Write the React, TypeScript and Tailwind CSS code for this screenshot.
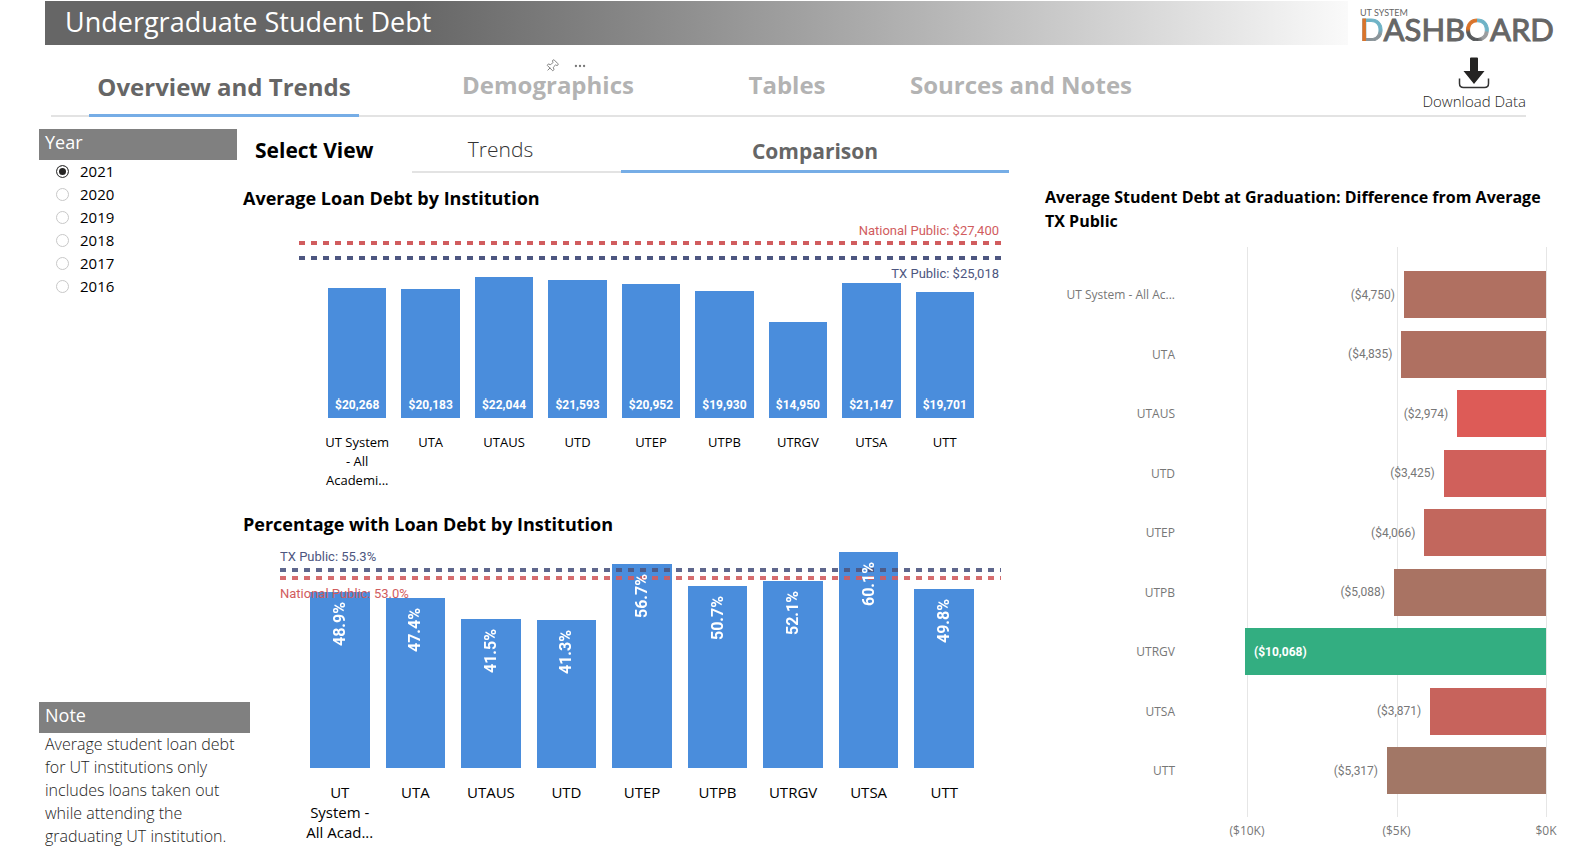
import { useState } from "react";
import { Ellipsis, Pin } from "lucide-react";

const years = ["2021", "2020", "2019", "2018", "2017", "2016"];

const tabs = [
  { name: "Overview and Trends", width: "w-[270px] mr-[71px]" },
  { name: "Demographics", width: "w-[236px]" },
  { name: "Tables", width: "w-[242px]" },
  { name: "Sources and Notes", width: "w-[226px]" },
];

const averageDebt = [
  { name: "UT System\n- All\nAcademi...", value: 20268 },
  { name: "UTA", value: 20183 },
  { name: "UTAUS", value: 22044 },
  { name: "UTD", value: 21593 },
  { name: "UTEP", value: 20952 },
  { name: "UTPB", value: 19930 },
  { name: "UTRGV", value: 14950 },
  { name: "UTSA", value: 21147 },
  { name: "UTT", value: 19701 },
];

const percentDebt = [
  { name: "UT\nSystem -\nAll Acad...", value: 48.9 },
  { name: "UTA", value: 47.4 },
  { name: "UTAUS", value: 41.5 },
  { name: "UTD", value: 41.3 },
  { name: "UTEP", value: 56.7 },
  { name: "UTPB", value: 50.7 },
  { name: "UTRGV", value: 52.1 },
  { name: "UTSA", value: 60.1 },
  { name: "UTT", value: 49.8 },
];

const difference = [
  { name: "UT System - All Ac...", value: 4750, color: "bg-[#b07061]" },
  { name: "UTA", value: 4835, color: "bg-[#af7061]" },
  { name: "UTAUS", value: 2974, color: "bg-[#dd5b57]" },
  { name: "UTD", value: 3425, color: "bg-[#d0605b]" },
  { name: "UTEP", value: 4066, color: "bg-[#c2675d]" },
  { name: "UTPB", value: 5088, color: "bg-[#a97363]" },
  { name: "UTRGV", value: 10068, color: "bg-[#33ae81]" },
  { name: "UTSA", value: 3871, color: "bg-[#c7635c]" },
  { name: "UTT", value: 5317, color: "bg-[#a27766]" },
];

// top of each value axis
const DEBT_MAX = 30800;
const PERCENT_MAX = 63.5;
const DIFF_MAX = 10068;

const redDash = "bg-[repeating-linear-gradient(90deg,#d15c5e_0_6px,transparent_6px_12px)]";
const navyDash = "bg-[repeating-linear-gradient(90deg,#4d5680_0_6px,transparent_6px_12px)]";

function Logo() {
  return (
    <div className="w-[196px] font-['Lato',sans-serif] text-[#666]">
      <div className="text-[9px] leading-[9px]">UT SYSTEM</div>
      <div className="flex text-[31px] leading-6 [-webkit-text-stroke:1px]">
        <span className="bg-[linear-gradient(90deg,#d9742b_0_6px,transparent_6px),linear-gradient(#6fb3c6_50%,#8a9499_75%)] bg-clip-text text-transparent">
          D
        </span>
        <span>ASHB</span>
        <span className="bg-[conic-gradient(#6fb3c6_0_100deg,#9a9c9e_110deg_150deg,#55585a_180deg_250deg,#d9742b_270deg)] bg-clip-text text-transparent">
          O
        </span>
        <span>ARD</span>
      </div>
    </div>
  );
}

function DownloadIcon() {
  return (
    <svg viewBox="0 0 32 32" className="h-8 w-8" aria-hidden="true">
      <path d="M12 1.500q0-1 1-1h6q1 0 1 1V14h6.500L16 27 5.500 14H12z" fill="#252423" />
      <path d="M1.500 21.500v5q0 4 4 4h21q4 0 4-4v-5" fill="none" stroke="#333" strokeWidth="1.500" />
    </svg>
  );
}

export default function App() {
  const [tab, setTab] = useState("Overview and Trends");
  const [view, setView] = useState("Comparison");
  const [year, setYear] = useState("2021");

  return (
    <div className="flex min-h-screen flex-col bg-white font-['Open_Sans','Noto_Sans',sans-serif] text-[#252423]">
      <header className="flex items-start justify-between pt-px pr-[30px] pl-[45px]">
        <h1 className="h-11 flex-1 bg-linear-to-r from-[#666] from-28% to-[#fafafa] pl-5 text-[27px] leading-[42px] text-white">
          Undergraduate Student Debt
        </h1>
        <div className="pt-[7px] pl-3">
          <Logo />
        </div>
      </header>

      <nav className="mr-[60px] ml-[51px] flex h-[72px] items-end justify-between border-b-2 border-[#e3e3e3] pl-[38px]">
        <div className="flex items-end">
          {tabs.map((t) => (
            <div key={t.name} className={`relative shrink-0 ${t.width}`}>
              <button
                onClick={() => setTab(t.name)}
                className={`-mb-0.5 h-[50px] w-full border-b-[3px] text-2xl font-bold whitespace-nowrap ${
                  tab === t.name ? "border-[#76ade6] pb-2 text-[#666]" : "border-transparent pb-3 text-[#b3b3b3]"
                }`}
              >
                {t.name}
              </button>
              {t.name === "Demographics" && (
                <div className="absolute -top-2 left-[115px] flex items-center gap-3.5 text-[#777]">
                  <button aria-label="Pin visual">
                    <Pin className="size-3.5 rotate-45" strokeWidth={1.5} />
                  </button>
                  <button aria-label="More options">
                    <Ellipsis className="size-3.5" strokeWidth={2} />
                  </button>
                </div>
              )}
            </div>
          ))}
        </div>
        <a href="#" className="flex flex-col items-center pb-0.5 text-[15px] leading-6 font-light whitespace-nowrap">
          <DownloadIcon />
          Download Data
        </a>
      </nav>

      <main className="mt-3 grid flex-1 grid-cols-[204px_766fr_547fr] pr-[30px] pl-[39px]">
        <aside className="flex flex-col justify-between pb-[3px]">
          <fieldset>
            <legend className="h-[31px] w-[198px] bg-[#808080] pl-1.5 text-lg leading-[27px] text-white">Year</legend>
            {years.map((y) => (
              <label key={y} className="flex h-[23px] items-center gap-[11px] pl-[17px] text-[15px] text-black">
                <input
                  type="radio"
                  name="year"
                  checked={year === y}
                  onChange={() => setYear(y)}
                  className="size-[13px] appearance-none rounded-full border border-[#c8c8c8] bg-white checked:border-[#444] checked:bg-[#252423] checked:shadow-[inset_0_0_0_2px_white]"
                />
                {y}
              </label>
            ))}
          </fieldset>
          <section className="w-[211px]">
            <h2 className="h-[31px] bg-[#808080] pl-1.5 text-lg leading-[27px] text-white">Note</h2>
            <p className="pr-3 pl-1.5 text-base leading-[23px] font-light">
              Average student loan debt for UT institutions only includes loans taken out while attending the graduating
              UT institution.
            </p>
          </section>
        </aside>

        <div>
          <div className="flex h-11">
            <h2 className="w-[169px] shrink-0 pl-3 text-[21px] leading-[42px] font-bold text-black">Select View</h2>
            <button
              onClick={() => setView("Trends")}
              className={`w-[209px] border-b-2 pr-8 text-[21px] ${
                view === "Trends" ? "border-[#76ade6] font-bold text-[#666]" : "border-[#e3e3e3] font-light text-[#333]"
              }`}
            >
              Trends
            </button>
            <button
              onClick={() => setView("Comparison")}
              className={`flex-1 border-b-[3px] pt-1 text-[21px] ${
                view === "Comparison" ? "border-[#76ade6] font-bold text-[#666]" : "border-[#e3e3e3] font-light text-[#333]"
              }`}
            >
              Comparison
            </button>
          </div>

          <section className="mt-[13px]">
            <h2 className="text-lg leading-6 font-bold text-black">Average Loan Debt by Institution</h2>
            <div className="relative mt-[11px] mr-1 ml-14 h-[197px]">
              <div className={`absolute inset-x-0 top-5 z-10 h-1 ${redDash}`} />
              <div className={`absolute inset-x-0 top-[35px] z-10 h-1 ${navyDash}`} />
              <span className="absolute top-0.5 right-1.5 font-['Roboto',sans-serif] text-[13px] leading-4 text-[#d15c5e]">
                National Public: $27,400
              </span>
              <span className="absolute top-[45px] right-1.5 font-['Roboto',sans-serif] text-[13px] leading-4 text-[#4d5680]">
                TX Public: $25,018
              </span>
              <div className="grid h-full grid-cols-9 items-end gap-[15px] pr-[31px] pl-[29px]">
                {averageDebt.map((d) => (
                  <div
                    key={d.name}
                    className="flex items-end justify-center bg-[#4a8ddc] pb-[5px] font-['Roboto',sans-serif] text-xs font-bold text-white"
                    style={{ height: `${(d.value / DEBT_MAX) * 100}%` }}
                  >
                    ${d.value.toLocaleString("en-US")}
                  </div>
                ))}
              </div>
            </div>
            <div className="mt-[15px] mr-[35px] ml-[85px] grid grid-cols-9 gap-[15px] text-center text-[13px] leading-[19px] text-black">
              {averageDebt.map((d) => (
                <span key={d.name} className="-mx-2 whitespace-pre">
                  {d.name}
                </span>
              ))}
            </div>
          </section>

          <section className="mt-[22px]">
            <h2 className="text-lg leading-6 font-bold text-black">Percentage with Loan Debt by Institution</h2>
            <div className="relative mt-1 mr-2 ml-[37px] h-[228px]">
              <div className="grid h-full grid-cols-9 items-end gap-4 pr-[27px] pl-[30px]">
                {percentDebt.map((d) => (
                  <div
                    key={d.name}
                    className="flex items-start justify-center bg-[#4a8ddc] pt-2.5 font-['Roboto',sans-serif] text-base leading-5 font-bold text-white"
                    style={{ height: `${(d.value / PERCENT_MAX) * 100}%` }}
                  >
                    <span className="relative z-10 rotate-180 [writing-mode:vertical-rl]">{d.value}%</span>
                  </div>
                ))}
              </div>
              <div className={`absolute inset-x-0 top-7 h-1 opacity-90 ${navyDash}`} />
              <div className={`absolute inset-x-0 top-9 h-1 opacity-90 ${redDash}`} />
              <span className="absolute top-[9px] left-0 font-['Roboto',sans-serif] text-[13px] leading-4 text-[#4d5680]">
                TX Public: 55.3%
              </span>
              <span className="absolute top-[46px] left-0 font-['Roboto',sans-serif] text-[13px] leading-4 text-[#d15c5e]">
                National Public: 53.0%
              </span>
            </div>
            <div className="mt-3.5 mr-[35px] ml-[67px] grid grid-cols-9 gap-4 text-center text-[15px] leading-5 text-black">
              {percentDebt.map((d) => (
                <span key={d.name} className="-mx-2 whitespace-pre">
                  {d.name}
                </span>
              ))}
            </div>
          </section>
        </div>

        <section className="pt-14 pl-9">
          <h2 className="text-base leading-6 font-bold text-black">
            Average Student Debt at Graduation: Difference from Average TX Public
          </h2>
          <div className="mt-3.5 mr-2.5 flex h-[570px] text-xs text-[#777]">
            <div className="flex w-[130px] shrink-0 flex-col justify-between pt-6 pb-[23px] text-right">
              {difference.map((d) => (
                <span key={d.name} className="leading-[47px] whitespace-nowrap">
                  {d.name}
                </span>
              ))}
            </div>
            <div className="relative ml-[70px] flex flex-1 flex-col justify-between pt-6 pb-[23px]">
              <div className="absolute inset-y-0 -right-px left-0.5 flex justify-between">
                <div className="w-px bg-[#e6e6e6]" />
                <div className="w-px bg-[#e6e6e6]" />
                <div className="w-px bg-[#e6e6e6]" />
              </div>
              {difference.map((d) => {
                const label = `($${d.value.toLocaleString("en-US")})`;
                const inside = d.value > 8000;
                return (
                  <div key={d.name} className="relative flex h-[47px] items-center justify-end font-['Roboto',sans-serif]">
                    {!inside && <span className="mr-[9px]">{label}</span>}
                    <div
                      className={`flex h-full items-center pl-[9px] font-bold text-white ${d.color}`}
                      style={{ width: `${(d.value / DIFF_MAX) * 100}%` }}
                    >
                      {inside && label}
                    </div>
                  </div>
                );
              })}
            </div>
          </div>
          <div className="mt-[5px] -mr-2 ml-[184px] flex justify-between text-xs leading-[18px] text-[#777]">
            <span className="w-9 text-center">($10K)</span>
            <span className="w-9 text-center">($5K)</span>
            <span className="w-9 text-center">$0K</span>
          </div>
        </section>
      </main>
    </div>
  );
}
